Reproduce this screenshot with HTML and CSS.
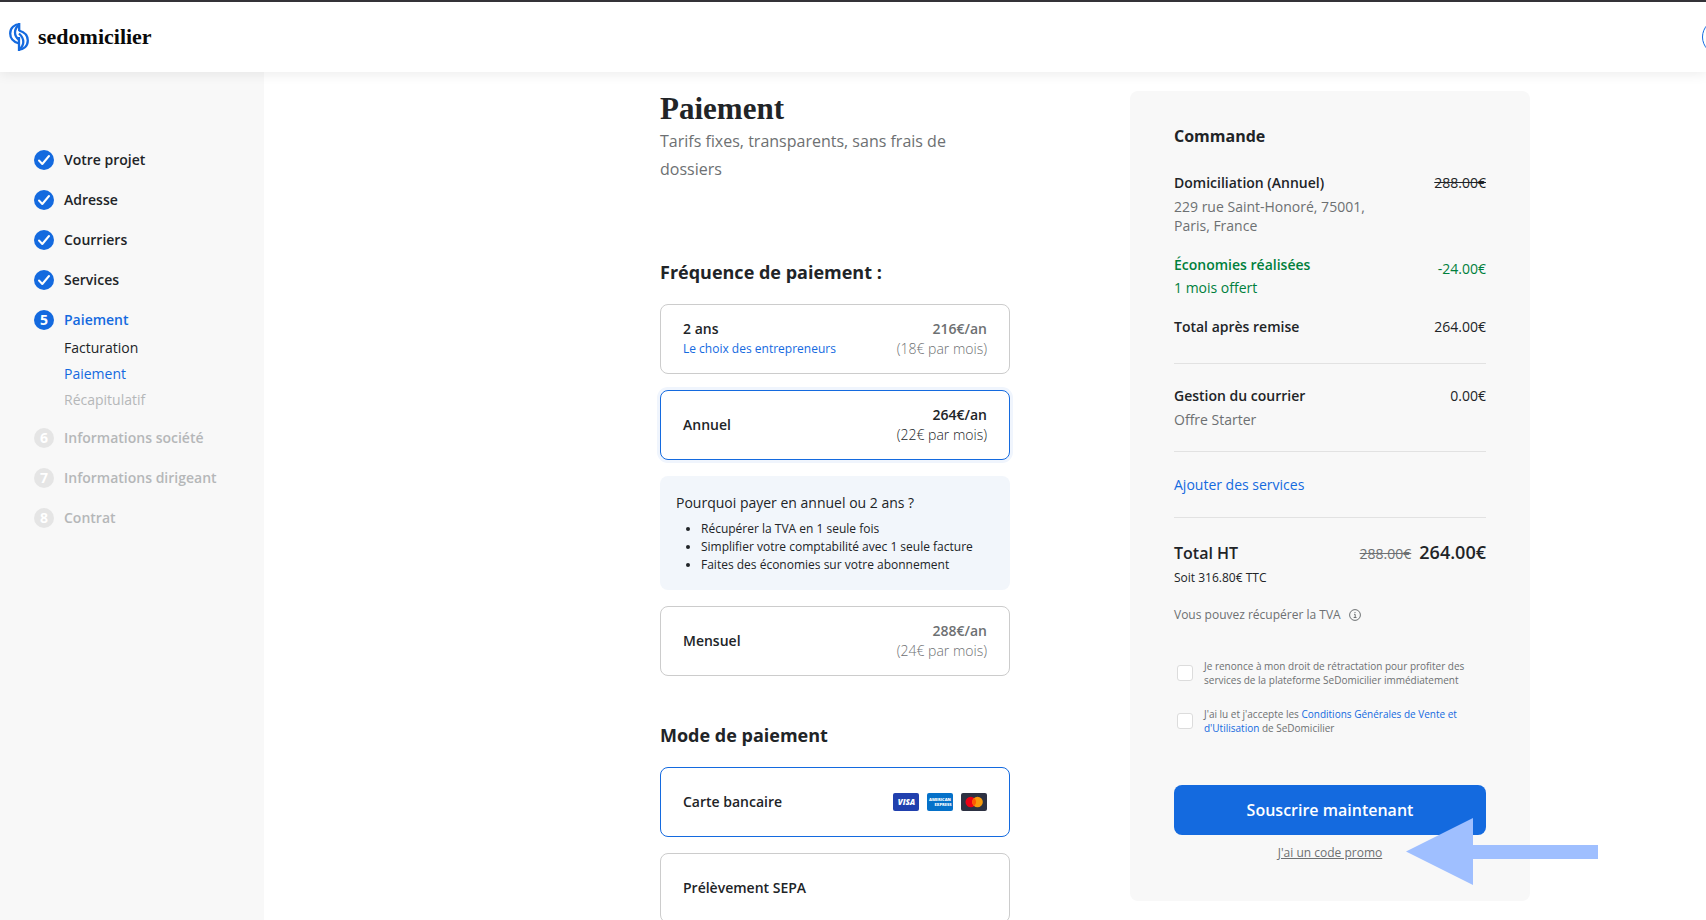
FILE: index.html
```html
<!DOCTYPE html>
<html lang="fr">
<head>
<meta charset="utf-8">
<meta name="viewport" content="width=device-width, initial-scale=1">
<title>Paiement – sedomicilier</title>
<link rel="stylesheet" href="styles.css">
</head>
<body>
<header class="header">
  <a class="logo" href="#">
    <svg class="logo-mark" viewBox="0 0 20 28" fill="none" stroke="#146adf" stroke-width="2.300" aria-hidden="true">
      <path d="M10.200 0v8"/>
      <path d="M11 1.200C5.300 1.200 1.200 5 1.200 10.500c0 5 3.500 8.500 8.800 10"/>
      <path d="M10 2C7.200 4 6 6.500 6 9.500c0 3.500 1.700 5.500 4 7.500"/>
      <path d="M10 28V14"/>
      <path d="M9 26.800c5.700 0 9.800-3.800 9.800-9.300 0-5-3.500-8.500-8.800-10"/>
      <path d="M10 26.500c2.800-2 4.300-4.500 4.300-7.500 0-4-2-6.500-4.300-8.500"/>
    </svg>
    <span>sedomicilier</span>
  </a>
  <button class="account" type="button" aria-label="Mon compte"></button>
</header>
<div class="layout">
  <nav class="sidebar" aria-label="Étapes">
    <ol class="steps">
      <li class="step"><span class="dot"><svg viewBox="0 0 20 20"><path d="M5 10.500l3.300 3.500L15 6"/></svg></span><a href="#">Votre projet</a></li>
      <li class="step"><span class="dot"><svg viewBox="0 0 20 20"><path d="M5 10.500l3.300 3.500L15 6"/></svg></span><a href="#">Adresse</a></li>
      <li class="step"><span class="dot"><svg viewBox="0 0 20 20"><path d="M5 10.500l3.300 3.500L15 6"/></svg></span><a href="#">Courriers</a></li>
      <li class="step"><span class="dot"><svg viewBox="0 0 20 20"><path d="M5 10.500l3.300 3.500L15 6"/></svg></span><a href="#">Services</a></li>
      <li class="step current"><span class="dot">5</span><a href="#">Paiement</a>
        <ul class="substeps">
          <li><a href="#">Facturation</a></li>
          <li class="active"><a href="#">Paiement</a></li>
          <li class="muted">Récapitulatif</li>
        </ul>
      </li>
      <li class="step disabled"><span class="dot">6</span><span>Informations société</span></li>
      <li class="step disabled"><span class="dot">7</span><span>Informations dirigeant</span></li>
      <li class="step disabled"><span class="dot">8</span><span>Contrat</span></li>
    </ol>
  </nav>
  <main class="main">
    <div class="payment">
      <h1>Paiement</h1>
      <p class="subtitle">Tarifs fixes, transparents, sans frais de dossiers</p>

      <h2>Fréquence de paiement :</h2>
      <div class="options">
        <label class="option">
          <input type="radio" name="frequence">
          <span class="option-name"><b>2 ans</b><small>Le choix des entrepreneurs</small></span>
          <span class="price"><b>216€/an</b><span>(18€ par mois)</span></span>
        </label>
        <label class="option glow">
          <input type="radio" name="frequence" checked>
          <span class="option-name"><b>Annuel</b></span>
          <span class="price"><b>264€/an</b><span>(22€ par mois)</span></span>
        </label>
        <section class="info">
          <h3>Pourquoi payer en annuel ou 2 ans ?</h3>
          <ul>
            <li>Récupérer la TVA en 1 seule fois</li>
            <li>Simplifier votre comptabilité avec 1 seule facture</li>
            <li>Faites des économies sur votre abonnement</li>
          </ul>
        </section>
        <label class="option">
          <input type="radio" name="frequence">
          <span class="option-name"><b>Mensuel</b></span>
          <span class="price"><b>288€/an</b><span>(24€ par mois)</span></span>
        </label>
      </div>

      <h2>Mode de paiement</h2>
      <div class="options">
        <label class="option">
          <input type="radio" name="mode" checked>
          <span class="option-name"><b>Carte bancaire</b></span>
          <span class="brands">
            <svg viewBox="0 0 26 18" role="img" aria-label="Visa"><rect width="26" height="18" rx="2" fill="#2140ae"/><text x="13.500" y="12" text-anchor="middle" class="brand-visa">VISA</text></svg>
            <svg viewBox="0 0 26 18" role="img" aria-label="American Express"><rect width="26" height="18" rx="2" fill="#0571c9"/><text x="13" y="8" text-anchor="middle" class="brand-amex">AMERICAN</text><text x="16" y="13" text-anchor="middle" class="brand-amex">EXPRESS</text></svg>
            <svg viewBox="0 0 26 18" role="img" aria-label="Mastercard"><rect width="26" height="18" rx="2" fill="#2d3142"/><circle cx="9.800" cy="9" r="5.300" fill="#eb0014"/><circle cx="16.500" cy="9" r="5.300" fill="#f79a0b"/><path d="M13.150 4.900a5.300 5.300 0 0 1 0 8.200 5.300 5.300 0 0 1 0-8.200z" fill="#ff5a00"/></svg>
          </span>
        </label>
        <label class="option">
          <input type="radio" name="mode">
          <span class="option-name"><b>Prélèvement SEPA</b></span>
        </label>
      </div>
    </div>

    <aside class="order">
      <h2>Commande</h2>
      <div class="line first">
        <div><b>Domiciliation (Annuel)</b><p class="address">229 rue Saint-Honoré, 75001, Paris, France</p></div>
        <s>288.00€</s>
      </div>
      <div class="line saving">
        <div><b>Économies réalisées</b><p>1 mois offert</p></div>
        <span>-24.00€</span>
      </div>
      <div class="line"><b>Total après remise</b><span>264.00€</span></div>
      <hr>
      <div class="line">
        <div><b>Gestion du courrier</b><p class="offer">Offre Starter</p></div>
        <span>0.00€</span>
      </div>
      <hr>
      <a class="add" href="#">Ajouter des services</a>
      <hr>
      <div class="total"><b>Total HT</b><span><s>288.00€</s><strong>264.00€</strong></span></div>
      <p class="ttc">Soit 316.80€ TTC</p>
      <p class="vat">Vous pouvez récupérer la TVA
        <svg viewBox="0 0 12 12" aria-hidden="true"><circle cx="6" cy="6" r="5.400"/><path d="M5 5.300h1.200V8.500M4.700 8.500h2.800M6 3v1"/></svg>
      </p>
      <div class="consents">
        <label class="consent"><input type="checkbox"><span>Je renonce à mon droit de rétractation pour profiter des services de la plateforme SeDomicilier immédiatement</span></label>
        <label class="consent"><input type="checkbox"><span>J'ai lu et j'accepte les <a href="#">Conditions Générales de Vente et d'Utilisation</a> de SeDomicilier</span></label>
      </div>
      <button class="subscribe" type="button">Souscrire maintenant</button>
      <div class="promo">
        <a href="#">J'ai un code promo</a>
        <svg class="arrow" viewBox="0 0 192 67" aria-hidden="true"><path d="M0 33.500L67 0v27h125v14H67v26z"/></svg>
      </div>
    </aside>
  </main>
</div>
</body>
</html>
```
FILE: styles.css
```css
:root {
  --blue: #146adf;
  --ink: #212427;
  --grey: #6d7072;
  --pale: #f8f8f8;
}

* { box-sizing: border-box; }

body {
  margin: 0;
  height: 100vh;
  overflow: hidden;
  display: flex;
  flex-direction: column;
  background: #fff;
  color: var(--ink);
  font: 400 14px/20px "Open Sans", "Noto Sans", sans-serif;
}

h1, h2, h3, p, ul, ol { margin: 0; padding: 0; }
b { font-weight: 600; }
a { color: inherit; text-decoration: none; }
button, input { font: inherit; }

/* Header */
.header {
  position: relative;
  z-index: 1;
  flex: none;
  display: flex;
  align-items: center;
  justify-content: space-between;
  height: 72px;
  padding-left: 9px;
  border-top: 2px solid #343238;
  background: #fff;
  box-shadow: 0 2px 12px rgba(0, 0, 0, 0.08);
}
.logo {
  display: flex;
  align-items: center;
  gap: 9px;
  color: #0a0a0a;
  font: 700 22px/28px "Liberation Serif", serif;
}
.logo-mark { width: 20px; height: 28px; }
.account {
  flex: none;
  width: 36px;
  height: 36px;
  margin-right: -32px;
  border: 1px solid var(--blue);
  border-radius: 50%;
  background: #fff;
}

.layout { flex: 1; display: flex; min-height: 0; }

/* Steps */
.sidebar {
  flex: none;
  width: 264px;
  padding: 78px 34px 0;
  background: var(--pale);
}
.steps, .substeps { list-style: none; }
.step {
  display: grid;
  grid-template-columns: 20px 1fr;
  column-gap: 10px;
  margin-bottom: 20px;
  font-weight: 600;
}
.dot {
  width: 20px;
  height: 20px;
  border-radius: 50%;
  background: var(--blue);
  color: #fff;
  font-weight: 700;
  text-align: center;
}
.dot svg {
  display: block;
  fill: none;
  stroke: #fff;
  stroke-width: 2;
  stroke-linecap: round;
  stroke-linejoin: round;
}
.current { margin-bottom: 18px; color: var(--blue); }
.disabled { color: #b5b7b8; }
.disabled .dot { background: #e5e5e5; }
.substeps {
  grid-column: 2;
  display: grid;
  gap: 6px;
  margin-top: 8px;
  color: var(--ink);
  font-weight: 400;
}
.substeps .active { color: var(--blue); }
.substeps .muted { color: #b5b7b8; }

/* Main columns */
.main {
  flex: 1;
  display: grid;
  grid-template-columns: 350px 400px;
  column-gap: 120px;
  justify-content: end;
  align-items: start;
  padding: 19px 176px 0 24px;
}

h1 { font: 700 31px/36px "Liberation Serif", serif; }
.subtitle {
  max-width: 320px;
  margin-bottom: 77px;
  color: var(--grey);
  font-size: 16px;
  line-height: 28px;
}
.payment h2 {
  margin-bottom: 20px;
  font-size: 18px;
  line-height: 24px;
  font-weight: 700;
}
.options { display: grid; gap: 16px; margin-bottom: 47px; }
.option {
  position: relative;
  display: flex;
  align-items: center;
  justify-content: space-between;
  min-height: 70px;
  padding: 0 22px;
  border: 1px solid #ccc;
  border-radius: 8px;
  background: #fff;
  cursor: pointer;
}
.option input {
  position: absolute;
  inset: 0;
  margin: 0;
  opacity: 0;
}
.option:has(:checked) { border-color: var(--blue); }
.glow { box-shadow: 0 0 0 3px #f0f5fd; }
.option-name, .price { display: grid; }
.option-name small { color: var(--blue); font-size: 12px; }
.price { color: var(--grey); font-weight: 300; text-align: right; }
.option:has(:checked) .price { color: var(--ink); }
.brands { display: flex; gap: 8px; }
.brands svg { width: 26px; height: 18px; }
.brand-visa { fill: #fff; font: italic 800 8px "Open Sans", sans-serif; }
.brand-amex { fill: #fff; font: 800 4px "Open Sans", sans-serif; }

.info { padding: 16px; border-radius: 8px; background: #f2f6fb; }
.info h3 { margin-bottom: 7px; font-size: 14px; font-weight: 500; line-height: 21px; }
.info ul { padding-left: 25px; font-size: 12px; line-height: 18px; }

/* Order summary */
.order {
  padding: 33px 44px 38px;
  border-radius: 8px;
  background: var(--pale);
}
.order h2 { margin-bottom: 25px; font-size: 16px; line-height: 24px; font-weight: 700; }
.line { display: flex; justify-content: space-between; }
.address { max-width: 220px; margin-top: 4px; color: var(--grey); line-height: 19px; }
.saving { margin: 20px 0 19px; color: #00803c; }
.saving p { margin-top: 3px; }
.saving span { padding-top: 4px; }
.offer { margin: 4px 0 -5px; color: var(--grey); }
.order hr {
  height: 1px;
  margin: 22px 0;
  border: 0;
  background: #e2e2e2;
}
.order .line + hr { margin: 26px 0 22px; }
.order .offer-end { margin-bottom: 23px; }
.add { display: block; padding-top: 1px; color: var(--blue); }
.total { display: flex; justify-content: space-between; align-items: baseline; line-height: 24px; }
.total b { font-size: 16px; }
.total s { margin-right: 8px; color: var(--grey); }
.total strong { font-size: 18px; font-weight: 600; }
.ttc { margin-top: 2px; font-size: 12px; }
.vat {
  display: flex;
  align-items: center;
  gap: 8px;
  margin-top: 17px;
  color: var(--grey);
  font-size: 12px;
}
.vat svg { width: 12px; height: 12px; fill: none; stroke: #6d7072; }
.consents { display: grid; gap: 20px; margin: 34px 0 50px; }
.consent {
  display: flex;
  align-items: center;
  gap: 11px;
  padding-left: 3px;
  color: var(--grey);
  font-size: 10px;
  line-height: 14px;
}
.consent input {
  appearance: none;
  flex: none;
  width: 16px;
  height: 16px;
  margin: 0;
  border: 1px solid #dcdcdc;
  border-radius: 3px;
  background: #fff;
}
.consent a { color: var(--blue); font-weight: 500; }
.subscribe {
  width: 100%;
  height: 50px;
  border: 0;
  border-radius: 8px;
  background: var(--blue);
  color: #fff;
  font-size: 16px;
  font-weight: 600;
}
.promo {
  position: relative;
  margin-top: 8px;
  color: var(--grey);
  font-size: 12px;
  text-align: center;
}
.promo a { text-decoration: underline; }
.arrow {
  position: absolute;
  top: -25px;
  right: -112px;
  width: 192px;
  height: 67px;
  fill: #9fbfff;
}
```
